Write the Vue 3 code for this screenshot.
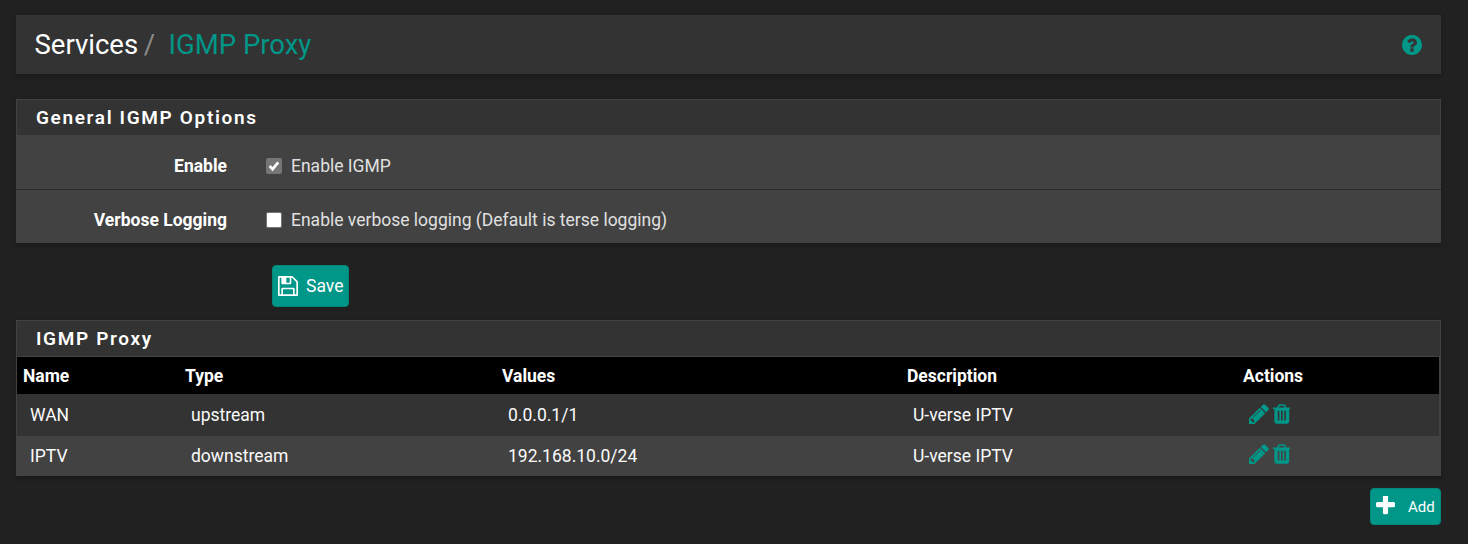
<script setup>
const pencil = "M491 1536l91-91-235-235-91 91v107h128v128h107zm523-928q0-22-22-22-10 0-17 7l-542 542q-7 7-7 17 0 22 22 22 10 0 17-7l542-542q7-7 7-17zm-54-192l416 416-832 832h-416v-416zm683 96q0 53-37 90l-166 166-416-416 166-165q36-38 90-38 53 0 91 38l235 234q37 39 37 91z";
const trash = "M704 1376v-704q0-14-9-23t-23-9h-64q-14 0-23 9t-9 23v704q0 14 9 23t23 9h64q14 0 23-9t9-23zm256 0v-704q0-14-9-23t-23-9h-64q-14 0-23 9t-9 23v704q0 14 9 23t23 9h64q14 0 23-9t9-23zm256 0v-704q0-14-9-23t-23-9h-64q-14 0-23 9t-9 23v704q0 14 9 23t23 9h64q14 0 23-9t9-23zm-544-992h448l-48-117q-7-9-17-11h-317q-10 2-17 11zm928 32v64q0 14-9 23t-23 9h-96v948q0 83-47 143.5t-113 60.5h-832q-66 0-113-58.5t-47-141.5v-952h-96q-14 0-23-9t-9-23v-64q0-14 9-23t23-9h309l70-167q15-37 54-63t79-26h320q40 0 79 26t54 63l70 167h309q14 0 23 9t9 23z";
const rows = [
  { name: "WAN", type: "upstream", values: "0.0.0.1/1", desc: "U-verse IPTV" },
  { name: "IPTV", type: "downstream", values: "192.168.10.0/24", desc: "U-verse IPTV" },
];
</script>

<template>
  <div class="page">
    <header class="crumbs">
      <h1><span class="parent">Services</span><span class="sep">/</span><span class="current">IGMP Proxy</span></h1>
      <svg class="help" viewBox="128 128 1536 1536" aria-hidden="true"><path fill="currentColor" d="M1024 1376v-192q0-14-9-23t-23-9h-192q-14 0-23 9t-9 23v192q0 14 9 23t23 9h192q14 0 23-9t9-23zm256-672q0-88-55.5-163t-138.5-116-170-41q-243 0-371 213-15 24 8 42l132 100q7 6 19 6 16 0 25-12 53-68 86-92 34-24 86-24 48 0 85.5 26t37.5 59q0 38-20 61t-68 45q-63 28-115.5 86.5t-52.5 125.5v36q0 14 9 23t23 9h192q14 0 23-9t9-23q0-19 21.5-49.5t54.5-49.5q32-18 49-28.5t46-35 44.5-48 28-60.5 12.5-81zm384 192q0 209-103 385.5t-279.5 279.5-385.5 103-385.5-103-279.5-279.5-103-385.5 103-385.5 279.5-279.5 385.5-103 385.5 103 279.5 279.5 103 385.5z"/></svg>
    </header>

    <section class="panel options">
      <h2>General IGMP Options</h2>
      <div class="form-row">
        <div class="label">Enable</div>
        <label class="check"><span class="box checked"><svg viewBox="0 0 16 16" aria-hidden="true"><path d="M3 8l3.4 3.6L12.8 3.8" fill="none" stroke="#fff" stroke-width="3"/></svg></span>Enable IGMP</label>
      </div>
      <div class="form-row">
        <div class="label">Verbose Logging</div>
        <label class="check"><span class="box"></span>Enable verbose logging (Default is terse logging)</label>
      </div>
    </section>

    <div class="save-line">
      <button class="btn save" type="button">
        <svg viewBox="128 128 1536 1536" aria-hidden="true"><path fill="currentColor" d="M512 1536h768v-384h-768v384zm896 0h128v-896q0-14-10-38.5t-20-34.5l-281-281q-10-10-34-20t-39-10v416q0 40-28 68t-68 28h-576q-40 0-68-28t-28-68v-416h-128v1280h128v-416q0-40 28-68t68-28h832q40 0 68 28t28 68v416zm-384-928v-320q0-13-9.5-22.5t-22.5-9.5h-192q-13 0-22.5 9.5t-9.5 22.5v320q0 13 9.5 22.5t22.5 9.5h192q13 0 22.5-9.5t9.5-22.5zm640 32v928q0 40-28 68t-68 28h-1344q-40 0-68-28t-28-68v-1344q0-40 28-68t68-28h928q40 0 88 20t76 48l280 280q28 28 48 76t20 88z"/></svg>
        Save
      </button>
    </div>

    <section class="panel proxy">
      <h2>IGMP Proxy</h2>
      <table>
        <colgroup>
          <col style="width:162px" /><col style="width:317px" /><col style="width:405px" /><col style="width:336px" /><col />
        </colgroup>
        <thead>
          <tr><th>Name</th><th>Type</th><th>Values</th><th>Description</th><th>Actions</th></tr>
        </thead>
        <tbody>
          <tr v-for="r in rows" :key="r.name">
            <td>{{ r.name }}</td>
            <td>{{ r.type }}</td>
            <td>{{ r.values }}</td>
            <td>{{ r.desc }}</td>
            <td class="actions">
              <svg class="pencil" viewBox="128 128 1536 1536" aria-hidden="true"><path fill="currentColor" :d="pencil"/></svg>
              <svg class="trash" viewBox="128 128 1408 1536" aria-hidden="true"><path fill="currentColor" :d="trash"/></svg>
            </td>
          </tr>
        </tbody>
      </table>
    </section>

    <div class="add-line">
      <button class="btn add" type="button">
        <svg viewBox="192 192 1408 1408" aria-hidden="true"><path fill="currentColor" d="M1600 736v192q0 40-28 68t-68 28h-416v416q0 40-28 68t-68 28h-192q-40 0-68-28t-28-68v-416h-416q-40 0-68-28t-28-68v-192q0-40 28-68t68-28h416v-416q0-40 28-68t68-28h192q40 0 68 28t28 68v416h416q40 0 68 28t28 68z"/></svg>
        <span>Add</span>
      </button>
    </div>
  </div>
</template>

<style>
html, body { margin: 0; background: #212121; }
</style>

<style scoped>
.page {
  box-sizing: border-box;
  width: 1468px;
  height: 544px;
  overflow: hidden;
  padding: 15px 27px 0 16px;
  background: #212121;
  color: #fff;
  font-family: Roboto, "Liberation Sans", sans-serif;
  font-size: 17.5px;
}
.crumbs {
  height: 59px;
  background: #333333;
  box-shadow: 0 2px 5px rgba(0, 0, 0, 0.25);
  display: flex;
  align-items: center;
  justify-content: space-between;
  padding: 0 19px 0 18.5px;
}
h1 {
  margin: 0;
  font-size: 27.5px;
  font-weight: 400;
  line-height: 59px;
}
.sep { color: #8a8a8a; margin: 0 13.5px 0 5.5px; }
.current { color: #009688; }
.help { width: 20px; height: 20px; color: #009688; }

.panel {
  box-shadow: 0 2px 5px rgba(0, 0, 0, 0.25);
  background: #424242;
}
.options { margin-top: 25px; }
h2 {
  box-sizing: border-box;
  margin: 0;
  height: 37px;
  padding-left: 19px;
  background: #333333;
  border: 1px solid #424242;
  font-size: 19px;
  font-weight: 600;
  letter-spacing: 1.65px;
  line-height: 35px;
}
.form-row {
  box-sizing: border-box;
  height: 54px;
  padding-top: 7px;
  display: flex;
  align-items: center;
  border-top: 1px solid #2b2b2b;
}
.options h2 + .form-row { border-top: 0; height: 53px; }
.label {
  width: 211px;
  text-align: right;
  font-weight: 700;
}
.check {
  margin-left: 39px;
  display: flex;
  align-items: center;
  color: #e0e0e0;
}
.box {
  box-sizing: border-box;
  width: 16px;
  height: 16px;
  margin-right: 9px;
  background: #fff;
  border: 1px solid #767676;
  border-radius: 2px;
  display: block;
}
.box.checked { background: #767676; border-color: #767676; }
.box svg { display: block; width: 14px; height: 14px; }

.btn {
  box-sizing: border-box;
  background: #009688;
  color: #fff;
  border: 1px solid #00897b;
  border-radius: 4px;
  font: inherit;
  display: flex;
  align-items: center;
  padding: 0;
}
.save-line { padding: 22px 0 13px 256px; }
.save { width: 77px; height: 42px; padding-left: 5px; gap: 8px; }
.save svg { width: 20px; height: 20px; flex: none; }

table {
  border-collapse: collapse;
  table-layout: fixed;
  background: #333333;
}
.proxy table { width: 1422px; margin-left: 1px; }
.proxy { height: 156px; }
th {
  box-sizing: border-box;
  height: 37px;
  background: #000;
  text-align: left;
  padding: 0 6px;
  font-weight: 700;
}
td {
  box-sizing: border-box;
  height: 42px;
  padding: 0 12px;
  color: #fafafa;
}
td:first-child { padding-left: 13px; }
tbody tr:nth-child(2) { background: #424242; }
tbody tr:nth-child(2) td { height: 40px; }
.actions { padding: 0 0 0 12px; color: #009688; white-space: nowrap; }
.actions svg { vertical-align: middle; margin-bottom: 3px; }
tbody tr:nth-child(2) .actions svg { margin-bottom: 4px; }
.pencil { width: 20px; height: 20px; }
.trash { width: 18px; height: 20px; margin-left: 3px; }

.add-line { display: flex; justify-content: flex-end; margin-top: 12px; }
.add { width: 71px; height: 37px; padding-left: 5px; font-size: 15px; }
.add svg { width: 19px; height: 19px; flex: none; margin-top: -2px; }
.add span { margin-left: 13px; }
</style>
